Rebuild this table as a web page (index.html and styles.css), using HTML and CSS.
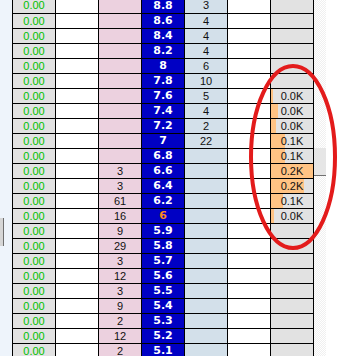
FILE: index.html
```html
<!DOCTYPE html>
<html>
<head>
<meta charset="utf-8">
<link rel="stylesheet" href="styles.css">
</head>
<body>
<div class="page">
  <div class="strip"><div class="grip"></div></div>
  <div class="grid">
    <div class="c1">0.00</div><div class="c2"></div><div class="c3"></div><div class="c4">8.8</div><div class="c5">3</div><div class="c6"></div><div class="c7"></div>
    <div class="c1">0.00</div><div class="c2"></div><div class="c3"></div><div class="c4">8.6</div><div class="c5">4</div><div class="c6"></div><div class="c7"></div>
    <div class="c1">0.00</div><div class="c2"></div><div class="c3"></div><div class="c4">8.4</div><div class="c5">4</div><div class="c6"></div><div class="c7"></div>
    <div class="c1">0.00</div><div class="c2"></div><div class="c3"></div><div class="c4">8.2</div><div class="c5">4</div><div class="c6"></div><div class="c7"></div>
    <div class="c1">0.00</div><div class="c2"></div><div class="c3"></div><div class="c4">8</div><div class="c5">6</div><div class="c6"></div><div class="c7"></div>
    <div class="c1">0.00</div><div class="c2"></div><div class="c3"></div><div class="c4">7.8</div><div class="c5">10</div><div class="c6"></div><div class="c7"></div>
    <div class="c1">0.00</div><div class="c2"></div><div class="c3"></div><div class="c4">7.6</div><div class="c5">5</div><div class="c6"></div><div class="c7" style="--w:2px">0.0K</div>
    <div class="c1">0.00</div><div class="c2"></div><div class="c3"></div><div class="c4">7.4</div><div class="c5">4</div><div class="c6"></div><div class="c7" style="--w:7px">0.0K</div>
    <div class="c1">0.00</div><div class="c2"></div><div class="c3"></div><div class="c4">7.2</div><div class="c5">2</div><div class="c6"></div><div class="c7" style="--w:5px">0.0K</div>
    <div class="c1">0.00</div><div class="c2"></div><div class="c3"></div><div class="c4">7</div><div class="c5">22</div><div class="c6"></div><div class="c7" style="--w:14px">0.1K</div>
    <div class="c1">0.00</div><div class="c2"></div><div class="c3"></div><div class="c4">6.8</div><div class="c5"></div><div class="c6"></div><div class="c7" style="--w:14px">0.1K</div>
    <div class="c1">0.00</div><div class="c2"></div><div class="c3">3</div><div class="c4">6.6</div><div class="c5"></div><div class="c6"></div><div class="c7" style="--w:42px">0.2K</div>
    <div class="c1">0.00</div><div class="c2"></div><div class="c3">3</div><div class="c4">6.4</div><div class="c5"></div><div class="c6"></div><div class="c7" style="--w:33px">0.2K</div>
    <div class="c1">0.00</div><div class="c2"></div><div class="c3">61</div><div class="c4">6.2</div><div class="c5"></div><div class="c6"></div><div class="c7" style="--w:12px">0.1K</div>
    <div class="c1">0.00</div><div class="c2"></div><div class="c3">16</div><div class="c4 last">6</div><div class="c5"></div><div class="c6"></div><div class="c7" style="--w:3px">0.0K</div>
    <div class="c1">0.00</div><div class="c2"></div><div class="c3">9</div><div class="c4">5.9</div><div class="c5"></div><div class="c6"></div><div class="c7"></div>
    <div class="c1">0.00</div><div class="c2"></div><div class="c3">29</div><div class="c4">5.8</div><div class="c5"></div><div class="c6"></div><div class="c7"></div>
    <div class="c1">0.00</div><div class="c2"></div><div class="c3">3</div><div class="c4">5.7</div><div class="c5"></div><div class="c6"></div><div class="c7"></div>
    <div class="c1">0.00</div><div class="c2"></div><div class="c3">12</div><div class="c4">5.6</div><div class="c5"></div><div class="c6"></div><div class="c7"></div>
    <div class="c1">0.00</div><div class="c2"></div><div class="c3">3</div><div class="c4">5.5</div><div class="c5"></div><div class="c6"></div><div class="c7"></div>
    <div class="c1">0.00</div><div class="c2"></div><div class="c3">9</div><div class="c4">5.4</div><div class="c5"></div><div class="c6"></div><div class="c7"></div>
    <div class="c1">0.00</div><div class="c2"></div><div class="c3">2</div><div class="c4">5.3</div><div class="c5"></div><div class="c6"></div><div class="c7"></div>
    <div class="c1">0.00</div><div class="c2"></div><div class="c3">12</div><div class="c4">5.2</div><div class="c5"></div><div class="c6"></div><div class="c7"></div>
    <div class="c1">0.00</div><div class="c2"></div><div class="c3">2</div><div class="c4">5.1</div><div class="c5"></div><div class="c6"></div><div class="c7"></div>
  </div>
  <div class="track"><div class="thumb"></div></div>
  <div class="rest"></div>
  <svg class="mark" width="340" height="356" viewBox="0 0 340 356">
    <ellipse cx="293" cy="157" rx="42" ry="91" fill="none" stroke="#e31b1b" stroke-width="4"/>
  </svg>
</div>
</body>
</html>
```

FILE: styles.css
```css
html, body {
  margin: 0;
  padding: 0;
  background: #ffffff;
}

.page {
  position: relative;
  display: flex;
  width: 340px;
  height: 356px;
  overflow: hidden;
  font-family: "Liberation Sans", Arial, sans-serif;
  font-size: 11px;
}

.strip {
  width: 12px;
  flex: none;
  background: #eef4fb;
  display: flex;
  flex-direction: column;
}

.grip {
  margin-top: 218px;
  width: 3px;
  height: 28px;
  background: #d6d6d6;
  border-right: 1px solid #6e6e6e;
}

.grid {
  flex: none;
  display: grid;
  grid-template-columns: repeat(7, 42px);
  grid-template-rows: 13px;
  grid-auto-rows: 14px;
  gap: 1px;
  background: #000000;
  border-left: 1px solid #000000;
  border-right: 1px solid #000000;
  align-self: flex-start;
  padding-bottom: 1px;
}

.grid > div {
  line-height: 14px;
  text-align: center;
  white-space: nowrap;
  overflow: hidden;
}

.grid > div:nth-child(-n+7) {
  line-height: 11px;
}

.c1 {
  background: #e2e2e2;
  color: #00c000;
}

.c2, .c6 {
  background: #ffffff;
}

.c3 {
  background: #ecd1df;
  color: #111111;
}

.c4 {
  background: #0000c4;
  color: #ffffff;
  font-family: "DejaVu Sans", Verdana, sans-serif;
  font-weight: bold;
  font-size: 11px;
}

.c4.last {
  color: #ff8a1c;
}

.c5 {
  background: #d3e0ea;
  color: #111111;
}

.c7 {
  --w: 0px;
  background: linear-gradient(to right, #ffc384 var(--w), #e2e2e2 var(--w));
  color: #111111;
}

.track {
  width: 12px;
  flex: none;
  background-color: #ffffff;
  background-image: repeating-conic-gradient(#f0f0f0 0 25%, #ffffff 0 50%);
  background-size: 2px 2px;
}

.thumb {
  margin-top: 148px;
  height: 27px;
  background: #e6e6e6;
  border-bottom: 1px solid #707070;
}

.rest {
  flex: 1;
  background: #ffffff;
}

.mark {
  position: absolute;
  left: 0;
  top: 0;
  pointer-events: none;
}
```
